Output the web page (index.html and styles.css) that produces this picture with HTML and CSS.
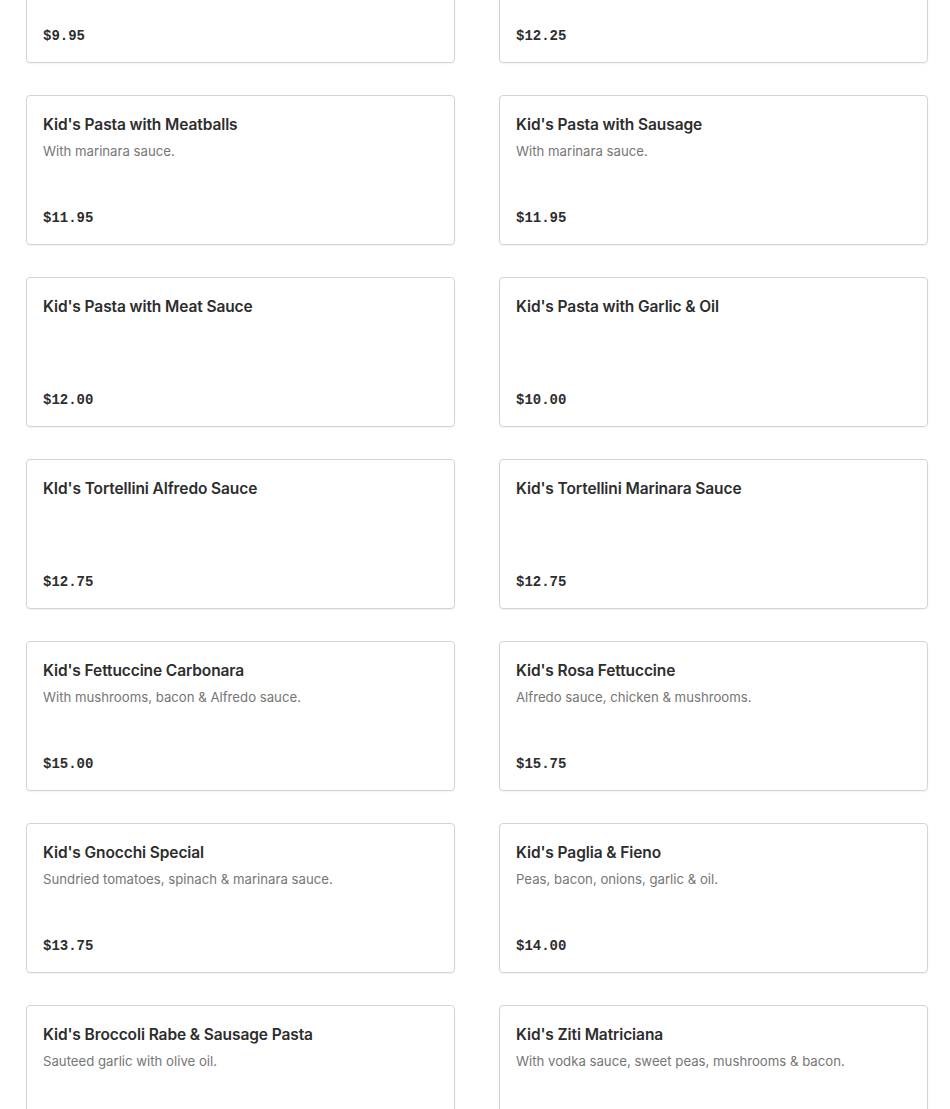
FILE: index.html
```html
<!DOCTYPE html>
<html>
<head>
<meta charset="utf-8">
<link rel="stylesheet" href="styles.css">
</head>
<body>
<div class="menu">
  <div class="card"><div class="title">Kid's Pasta with Butter</div><div class="price">$9.95</div></div>
  <div class="card"><div class="title">Kid's Ravioli</div><div class="price">$12.25</div></div>

  <div class="card"><div class="title">Kid's Pasta with Meatballs</div><div class="desc">With marinara sauce.</div><div class="price">$11.95</div></div>
  <div class="card"><div class="title">Kid's Pasta with Sausage</div><div class="desc">With marinara sauce.</div><div class="price">$11.95</div></div>

  <div class="card"><div class="title">Kid's Pasta with Meat Sauce</div><div class="price">$12.00</div></div>
  <div class="card"><div class="title">Kid's Pasta with Garlic &amp; Oil</div><div class="price">$10.00</div></div>

  <div class="card"><div class="title">KId's Tortellini Alfredo Sauce</div><div class="price">$12.75</div></div>
  <div class="card"><div class="title">Kid's Tortellini Marinara Sauce</div><div class="price">$12.75</div></div>

  <div class="card"><div class="title">Kid's Fettuccine Carbonara</div><div class="desc">With mushrooms, bacon &amp; Alfredo sauce.</div><div class="price">$15.00</div></div>
  <div class="card"><div class="title">Kid's Rosa Fettuccine</div><div class="desc">Alfredo sauce, chicken &amp; mushrooms.</div><div class="price">$15.75</div></div>

  <div class="card"><div class="title">Kid's Gnocchi Special</div><div class="desc">Sundried tomatoes, spinach &amp; marinara sauce.</div><div class="price">$13.75</div></div>
  <div class="card"><div class="title">Kid's Paglia &amp; Fieno</div><div class="desc">Peas, bacon, onions, garlic &amp; oil.</div><div class="price">$14.00</div></div>

  <div class="card"><div class="title">Kid's Broccoli Rabe &amp; Sausage Pasta</div><div class="desc">Sauteed garlic with olive oil.</div><div class="price">$12.95</div></div>
  <div class="card"><div class="title">Kid's Ziti Matriciana</div><div class="desc">With vodka sauce, sweet peas, mushrooms &amp; bacon.</div><div class="price">$13.95</div></div>
</div>
</body>
</html>
```
FILE: styles.css
```css
html, body {
  margin: 0;
  padding: 0;
  background: #ffffff;
  overflow: hidden;
}
body {
  font-family: Inter, "Liberation Sans", sans-serif;
  color: #2d2d2d;
}
.menu {
  display: grid;
  grid-template-columns: 429px 429px;
  column-gap: 44px;
  row-gap: 32px;
  margin-top: -87px;
  padding-left: 26px;
}
.card {
  box-sizing: border-box;
  height: 150px;
  border: 1px solid #d4d4d4;
  border-radius: 4px;
  padding: 17px 16px 16px;
  display: flex;
  flex-direction: column;
  box-shadow: 0 1px 2px rgba(0,0,0,0.06);
}
.title {
  font-size: 15.5px;
  font-weight: 600;
  line-height: 24px;
  color: #2d2d2d;
  letter-spacing: -0.1px;
}
.desc {
  margin-top: 4px;
  font-size: 13.2px;
  line-height: 20px;
  color: #767676;
}
.price {
  margin-top: auto;
  font-family: "Liberation Mono", "DejaVu Sans Mono", monospace;
  font-weight: 700;
  font-size: 14px;
  line-height: 20px;
  color: #2d2d2d;
}
```
